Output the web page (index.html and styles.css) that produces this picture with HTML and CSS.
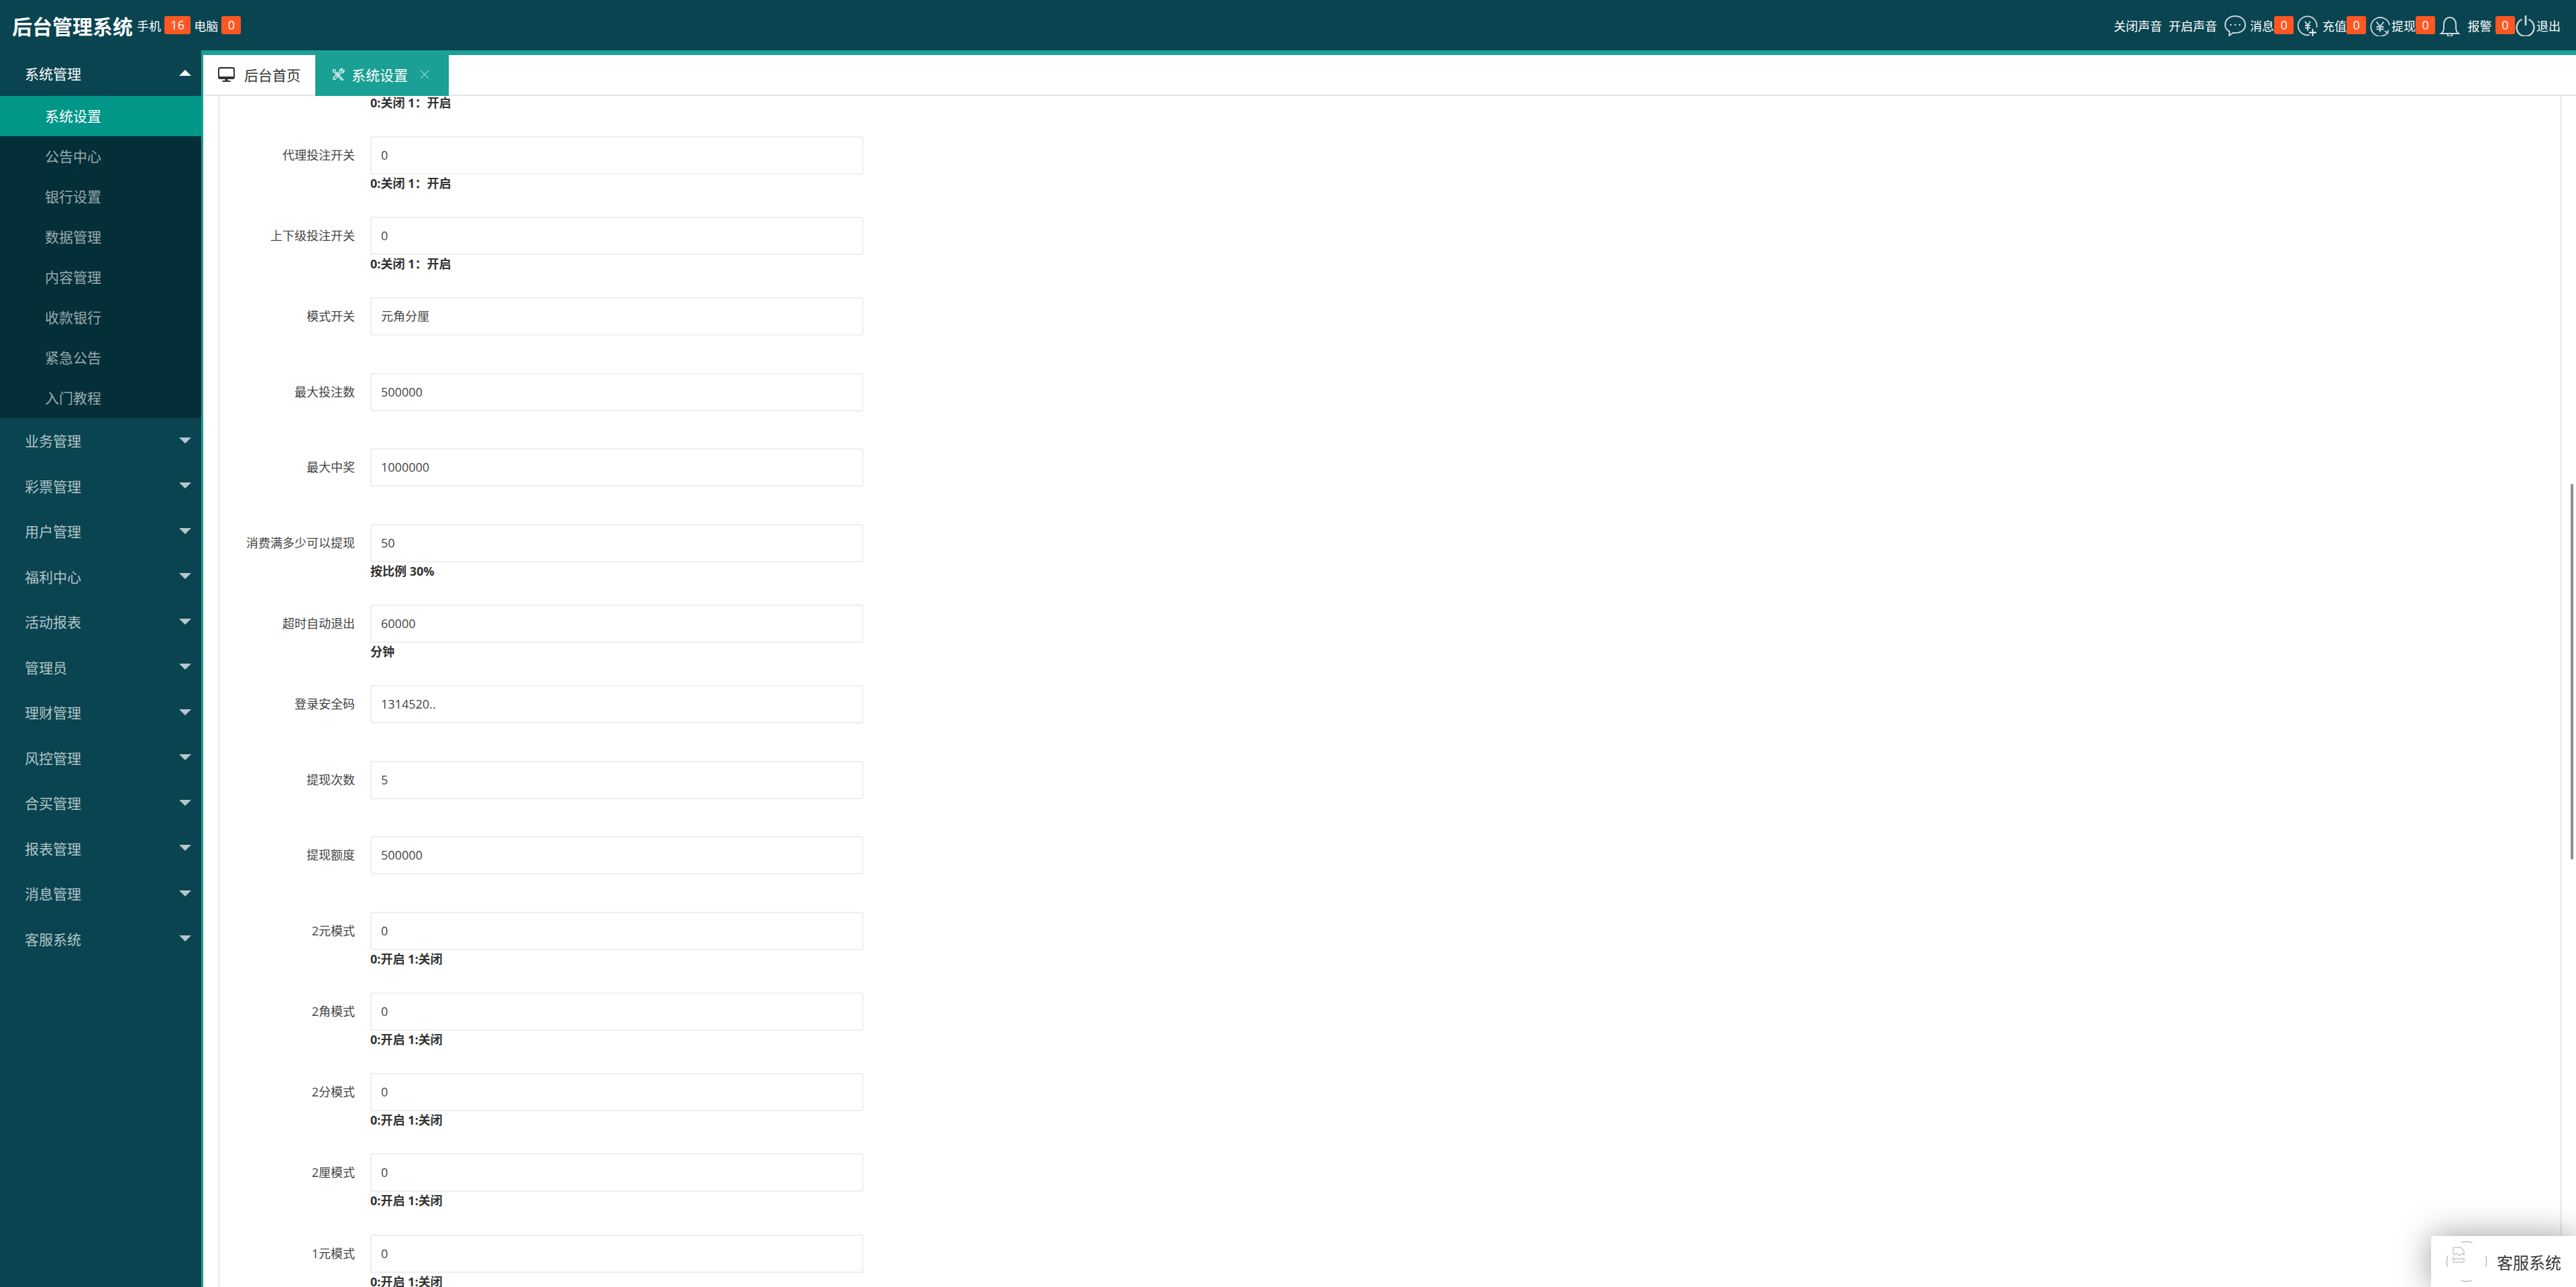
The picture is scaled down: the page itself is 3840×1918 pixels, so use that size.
FILE: index.html
```html
<!DOCTYPE html>
<html lang="zh-CN">
<head>
    <meta charset="UTF-8">
    <title>后台管理系统</title>
    <link rel="stylesheet" href="styles.css">
</head>
<body>
    <div class="header">
        <div class="logo">后台管理系统</div>
        <span class="stat">手机</span><b class="badge">16</b>
        <span class="stat">电脑</span><b class="badge">0</b>

        <div class="tools">
            <a class="tool">关闭声音</a>
            <a class="tool tool-sound">开启声音</a>

            <svg class="tool-icon icon-chat" viewBox="0 0 32 32" fill="none" stroke="#cbd8db" stroke-width="2">
                <path d="M16 2c8 0 15 5 15 13s-7 12-15 12c-1 0-2 0-3-.2L7 31l.6-6C3.500 23 1 19.500 1 15 1 7 8 2 16 2z"/>
                <circle cx="9.500" cy="15" r="1.300" fill="#cbd8db" stroke="none"/>
                <circle cx="16" cy="15" r="1.300" fill="#cbd8db" stroke="none"/>
                <circle cx="22.500" cy="15" r="1.300" fill="#cbd8db" stroke="none"/>
            </svg>
            <span class="tool-text text-msg">消息</span><b class="badge">0</b>

            <svg class="tool-icon icon-pay" viewBox="0 0 32 32" fill="none" stroke="#cbd8db" stroke-width="1.800">
                <path d="M19 30A14 14 0 1 1 29.500 19"/>
                <path d="M12 10l4 5.500 4-5.500M16 15.500v8.500M12 16h8M12 19.500h8" stroke-width="2"/>
                <path d="M23.500 21v11M18 26.500h11" stroke="#fff"/>
            </svg>
            <span class="tool-text text-pay">充值</span><b class="badge">0</b>

            <svg class="tool-icon icon-draw" viewBox="0 0 32 32" fill="none" stroke="#cbd8db" stroke-width="1.800">
                <path d="M29 15.500A14 14 0 1 0 26 27"/>
                <path d="M22 24l4 3.500 1.500-5"/>
                <path d="M9.500 10.500l5.500 7 5.500-7M15 17.500v8M9.500 18h11M9.500 21.500h11" stroke-width="2"/>
            </svg>
            <span class="tool-text">提现</span><b class="badge">0</b>

            <svg class="tool-icon icon-bell" viewBox="0 -2 32 32" fill="none" stroke="#cbd8db" stroke-width="2">
                <path d="M3 26c3-2 4-5 4-9V12c0-6 4-10 9-10s9 4 9 10v5c0 4 1 7 4 9z"/>
                <path d="M12.500 26.500c0 5 7 5 7 0"/>
            </svg>
            <span class="tool-text text-alarm">报警</span><b class="badge badge-alarm">0</b>

            <svg class="tool-icon icon-power" viewBox="0 0 32 32" fill="none" stroke="#cbd8db" stroke-width="2.400">
                <path d="M10.500 7A13 13 0 1 0 20.500 7"/>
                <path d="M16 1v15" stroke-width="2.800"/>
            </svg>
            <span class="tool-text">退出</span>
        </div>
    </div>

    <div class="layout">
        <div class="sidebar">
            <div class="nav-item nav-open">系统管理<i class="arrow arrow-up"></i></div>
            <div class="sub-nav">
                <div class="sub-item active">系统设置</div>
                <div class="sub-item">公告中心</div>
                <div class="sub-item">银行设置</div>
                <div class="sub-item">数据管理</div>
                <div class="sub-item">内容管理</div>
                <div class="sub-item">收款银行</div>
                <div class="sub-item">紧急公告</div>
                <div class="sub-item">入门教程</div>
            </div>
            <div class="nav-item">业务管理<i class="arrow"></i></div>
            <div class="nav-item">彩票管理<i class="arrow"></i></div>
            <div class="nav-item">用户管理<i class="arrow"></i></div>
            <div class="nav-item">福利中心<i class="arrow"></i></div>
            <div class="nav-item">活动报表<i class="arrow"></i></div>
            <div class="nav-item">管理员<i class="arrow"></i></div>
            <div class="nav-item">理财管理<i class="arrow"></i></div>
            <div class="nav-item">风控管理<i class="arrow"></i></div>
            <div class="nav-item">合买管理<i class="arrow"></i></div>
            <div class="nav-item">报表管理<i class="arrow"></i></div>
            <div class="nav-item">消息管理<i class="arrow"></i></div>
            <div class="nav-item">客服系统<i class="arrow"></i></div>
        </div>

        <div class="main">
            <div class="tabs">
                <div class="tab">
                    <svg class="tab-icon-home" viewBox="0 0 25 22">
                        <path d="M3 0h19a3 3 0 0 1 3 3v12a3 3 0 0 1-3 3H3a3 3 0 0 1-3-3V3a3 3 0 0 1 3-3zm0 2.200a1 1 0 0 0-1 1V14h21V3.200a1 1 0 0 0-1-1z" fill="#333"/>
                        <path d="M10.500 18h4v2h4v2h-12v-2h4z" fill="#333"/>
                    </svg>
                    后台首页
                </div>
                <div class="tab tab-active">
                    <svg class="tab-icon-tools" viewBox="0 0 20 18" fill="none" stroke="#fff" stroke-width="1.200">
                        <path d="M2 1.500l3 1 .5 2.500 11 11.500c-.5 1-1.200 1.200-2 1L3.800 6 1.500 5z"/>
                        <path d="M18 2.500l-3 2-1.500-1.500 2-2.300c-2.500-.7-4.500 1-4 3.800L2 13.500c-1 1.500.8 3.700 2.500 2.500l8.500-9.500c2.800 1 5.500-1 5-4z"/>
                    </svg>
                    系统设置
                    <svg class="tab-close" viewBox="0 0 14 14" stroke="#fff" stroke-opacity="0.5" stroke-width="1.300">
                        <path d="M1 1l12 12M13 1L1 13"/>
                    </svg>
                </div>
            </div>

            <div class="scroll">
                <div class="field">
                    <div class="hint hint-top">0:关闭 1：开启</div>

                    <div class="row">
                        <label>代理投注开关</label>
                        <div class="input">0</div>
                        <div class="hint">0:关闭 1：开启</div>
                    </div>
                    <div class="row">
                        <label>上下级投注开关</label>
                        <div class="input">0</div>
                        <div class="hint">0:关闭 1：开启</div>
                    </div>
                    <div class="row">
                        <label>模式开关</label>
                        <div class="input">元角分厘</div>
                    </div>
                    <div class="row">
                        <label>最大投注数</label>
                        <div class="input">500000</div>
                    </div>
                    <div class="row">
                        <label>最大中奖</label>
                        <div class="input">1000000</div>
                    </div>
                    <div class="row">
                        <label>消费满多少可以提现</label>
                        <div class="input">50</div>
                        <div class="hint">按比例 30%</div>
                    </div>
                    <div class="row">
                        <label>超时自动退出</label>
                        <div class="input">60000</div>
                        <div class="hint">分钟</div>
                    </div>
                    <div class="row">
                        <label>登录安全码</label>
                        <div class="input">1314520..</div>
                    </div>
                    <div class="row">
                        <label>提现次数</label>
                        <div class="input">5</div>
                    </div>
                    <div class="row">
                        <label>提现额度</label>
                        <div class="input">500000</div>
                    </div>
                    <div class="row">
                        <label>2元模式</label>
                        <div class="input">0</div>
                        <div class="hint">0:开启 1:关闭</div>
                    </div>
                    <div class="row">
                        <label>2角模式</label>
                        <div class="input">0</div>
                        <div class="hint">0:开启 1:关闭</div>
                    </div>
                    <div class="row">
                        <label>2分模式</label>
                        <div class="input">0</div>
                        <div class="hint">0:开启 1:关闭</div>
                    </div>
                    <div class="row">
                        <label>2厘模式</label>
                        <div class="input">0</div>
                        <div class="hint">0:开启 1:关闭</div>
                    </div>
                    <div class="row">
                        <label>1元模式</label>
                        <div class="input">0</div>
                        <div class="hint">0:开启 1:关闭</div>
                    </div>
                </div>
                <div class="scroll-thumb"></div>
            </div>
        </div>
    </div>

    <div class="service">
        <svg class="service-avatar" viewBox="0 0 60 60" fill="none">
            <circle cx="30" cy="30" r="29.500" stroke="#a0a0a0" stroke-width="1" stroke-dasharray="17 29.350" stroke-dashoffset="8.500"/>
            <path d="M10 9h11l5 5v6l-3-2-4 3-4-3-3 2-2-2zM10 24l3 3 3-2 4 2 3-2 3 2v4H10z" stroke="#c9c9c9" stroke-width="1.500"/>
        </svg>
        <span class="service-text">客服系统</span>
    </div>
</body>
</html>
```

FILE: styles.css
```css
* {
    margin: 0;
    padding: 0;
    box-sizing: border-box;
}

html, body {
    height: 100%;
    overflow: hidden;
}

body {
    font-family: "Open Sans", "Noto Sans CJK SC", sans-serif;
    font-size: 18px;
    background-color: #fff;
    color: #333;
    display: flex;
    flex-direction: column;
}

/* header */
.header {
    height: 75px;
    flex: none;
    display: flex;
    align-items: center;
    padding: 0 23px 0 18px;
    background-color: #094450;
    color: #fff;
}

.logo {
    width: 180px;
    font-size: 30px;
    font-weight: bold;
    white-space: nowrap;
}

.stat {
    margin-left: 5px;
    margin-right: 5px;
}

.logo + .stat {
    margin-left: 6px;
}

.badge {
    height: 27px;
    line-height: 27px;
    padding: 0 9.350px;
    border-radius: 3px;
    font-weight: normal;
    background-color: #ff5722;
    color: #fff;
}

.tools {
    margin-left: auto;
    display: flex;
    align-items: center;
}

.tool-sound {
    margin-left: 10px;
}

.tool-icon {
    width: 32px;
    height: 32px;
    flex: none;
    margin-left: 6px;
}

.icon-chat {
    margin-left: 11px;
}

.icon-pay {
    margin-left: 5px;
}

.icon-power {
    margin-left: 0;
}

.text-msg,
.text-pay {
    margin-left: 6px;
}

.text-alarm {
    margin-left: 10.500px;
}

.badge-alarm {
    margin-left: 5.500px;
}

/* sidebar */
.layout {
    flex: 1;
    display: flex;
    min-height: 0;
}

.sidebar {
    width: 303px;
    flex: none;
    background-color: #094450;
    border-right: 3px solid #1aa094;
    font-size: 21px;
}

.nav-item {
    height: 67.500px;
    display: flex;
    align-items: center;
    justify-content: space-between;
    padding: 0 15px 0 37px;
    color: rgba(255, 255, 255, 0.7);
}

.nav-open {
    color: #fff;
}

.arrow {
    width: 0;
    height: 0;
    border-left: 9px solid transparent;
    border-right: 9px solid transparent;
    border-top: 9px solid rgba(255, 255, 255, 0.7);
}

.arrow-up {
    border-top: 0;
    border-bottom: 9px solid #fff;
}

.sub-nav {
    background-color: #042f38;
    border-radius: 0 0 3px 3px;
}

.sub-item {
    height: 60px;
    line-height: 60px;
    padding-left: 67px;
    color: rgba(255, 255, 255, 0.6);
}

.sub-item.active {
    background-color: #009688;
    color: #fff;
}

/* tabs */
.main {
    flex: 1;
    min-width: 0;
    display: flex;
    flex-direction: column;
    border-top: 7px solid #1aa094;
}

.tabs {
    height: 61px;
    flex: none;
    display: flex;
    border-bottom: 2px solid #e6e6e6;
    font-size: 21px;
}

.tab {
    width: 167px;
    height: 61px;
    display: flex;
    align-items: center;
    padding-left: 22px;
    padding-bottom: 4px;
}

.tab-icon-home {
    width: 25px;
    height: 22px;
    margin-right: 14px;
}

.tab-active {
    width: 199px;
    padding-left: 25px;
    background-color: #1aa094;
    color: #fff;
}

.tab-icon-tools {
    width: 20px;
    height: 18px;
    margin-right: 9px;
}

.tab-close {
    width: 14px;
    height: 14px;
    margin-left: 18px;
}

/* form */
.scroll {
    flex: 1;
    min-height: 0;
    position: relative;
    overflow: hidden;
    padding-top: 2px;
}

.field {
    margin: 0 22px 0 23px;
    border-left: 1px solid #d4d4e4;
    border-right: 1px solid #d4d4e4;
}

.row {
    display: grid;
    grid-template-columns: 202px 735px;
    column-gap: 23px;
    align-content: start;
    min-height: 76.500px;
    margin-bottom: 36px;
}

.row label {
    line-height: 57px;
    text-align: right;
    color: #444;
}

.input {
    height: 57px;
    line-height: 53px;
    padding-left: 14px;
    border: 2px solid #eee;
    border-radius: 3px;
    color: #444;
}

.hint {
    grid-column: 2;
    height: 27.250px;
    line-height: 27px;
    font-weight: bold;
    white-space: pre;
}

.hint-top {
    height: 21px;
    line-height: 21px;
    margin: -2.500px 0 39px 225px;
}

.scroll-thumb {
    position: absolute;
    top: 578px;
    right: 4px;
    width: 4px;
    height: 560px;
    border-radius: 2px;
    background-color: #8f8f8f;
}

/* service box */
.service {
    position: fixed;
    right: 0;
    bottom: 0;
    width: 216px;
    height: 76px;
    display: flex;
    align-items: center;
    padding-left: 23px;
    border-radius: 4px 0 0 0;
    background-color: #fff;
    box-shadow: 0 0 50px rgba(0, 0, 0, 0.4);
}

.service-avatar {
    width: 60px;
    height: 60px;
    flex: none;
}

.service-text {
    margin-left: 15px;
    font-size: 24px;
    white-space: nowrap;
}
```
